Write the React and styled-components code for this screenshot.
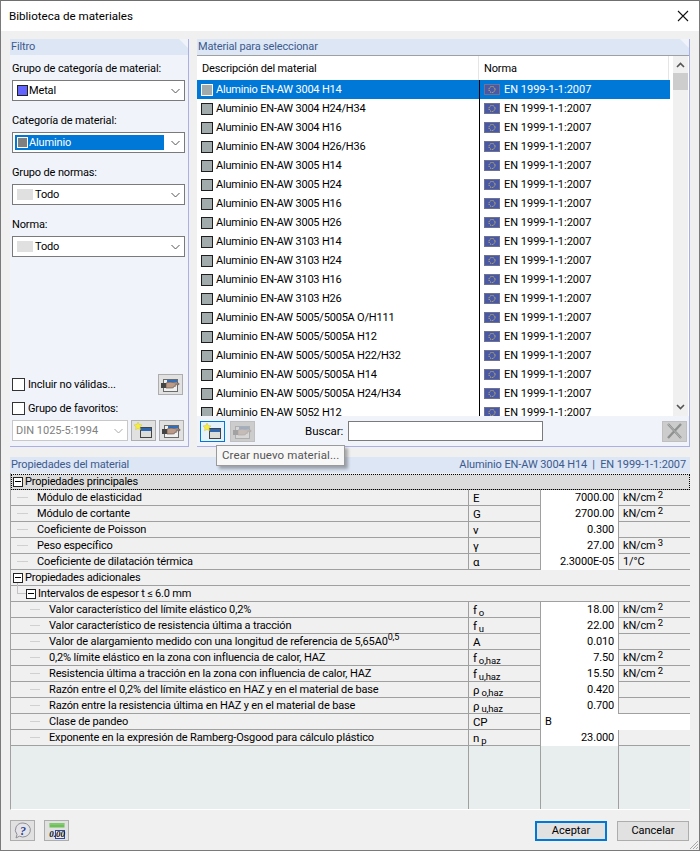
import React from 'react'
import styled, { createGlobalStyle } from 'styled-components'

const Global = createGlobalStyle`
  html, body { margin: 0; padding: 0; background: #f0f0f0; }
  * { box-sizing: border-box; }
`

const Dialog = styled.div`
  width: 700px;
  height: 851px;
  display: flex;
  flex-direction: column;
  background: #f0f0f0;
  border: 1px solid #7a7a7a;
  border-top-color: #6f6f6f;
  font-family: Roboto, "Noto Sans", sans-serif;
  font-size: 11px;
  letter-spacing: -.15px;
  color: #000;
  overflow: hidden;
  position: relative;
`

const TitleBar = styled.div`
  height: 30px;
  flex: none;
  background: #fff;
  display: flex;
  align-items: center;
  justify-content: space-between;
  padding: 0 10px 0 8px;
  font-size: 11.6px;
  letter-spacing: 0;
`

const Body = styled.div`
  flex: 1;
  min-height: 0;
  display: flex;
  flex-direction: column;
  padding: 8px 9px 9px 9px;
`

const TopRow = styled.div`
  display: flex;
  gap: 8px;
  height: 408px;
  flex: none;
`

const Panel = styled.section`
  display: flex;
  flex-direction: column;
  width: ${({ $width }) => $width};
  background: #f0f4fa;
  border-right: 1px solid #aab0e6;
  border-bottom: 1px solid #aab0e6;
`

const PanelHead = styled.div`
  height: 16px;
  flex: none;
  padding: 0 2px 0 1px;
  display: flex;
  justify-content: space-between;
  align-items: center;
  background: #dce6f4;
  color: #3c5a8e;
  line-height: 16px;
  white-space: nowrap;
  clip-path: ${({ $cut }) => $cut ? 'polygon(0 0, calc(100% - 9px) 0, 100% 9px, 100% 100%, 0 100%)' : 'none'};
`

const FilterBody = styled.div`
  flex: 1;
  display: flex;
  flex-direction: column;
  padding: 5px 5px 5px 2px;
`

const FieldLabel = styled.label`
  height: 20px;
  line-height: 18px;
  display: block;
  white-space: nowrap;
`

const Select = styled.div`
  height: 21px;
  width: 173px;
  flex: none;
  margin-bottom: 11px;
  display: flex;
  align-items: center;
  padding: 0 4px 0 2px;
  background: #fff;
  border: 1px solid #7a7a7a;
`

const SelectValue = styled.div`
  flex: 1;
  height: 15px;
  margin-right: 7px;
  display: flex;
  align-items: center;
  gap: 1px;
  padding-left: 2px;
  background: ${({ $active }) => $active ? '#0078d7' : 'transparent'};
  color: ${({ $active }) => $active ? '#fff' : '#000'};
`

const Color = styled.span`
  width: ${({ $wide }) => $wide ? '16px' : '11px'};
  height: 11px;
  flex: none;
  margin-right: ${({ $wide }) => $wide ? '1px' : '0'};
  background: ${({ $color }) => $color};
  border: 1px solid ${({ $line }) => $line || '#222'};
`

const Chevron = ({ color = '#555' }) => (
  <svg width="9" height="6" viewBox="0 0 9 6" fill="none">
    <path d="M.5 1l4 4 4-4" stroke={color} strokeWidth="1" />
  </svg>
)

const CheckRow = styled.div`
  height: 21px;
  flex: none;
  display: flex;
  align-items: center;
  justify-content: space-between;
  margin-top: ${({ $top }) => $top || '0'};
`

const CheckLabel = styled.label`
  display: flex;
  align-items: center;
  gap: 3px;
  white-space: nowrap;
`

const Box = styled.span`
  width: 13px;
  height: 13px;
  background: #fff;
  border: 1px solid #333;
  display: block;
`

const FavRow = styled.div`
  display: flex;
  align-items: center;
  gap: 3px;
  margin-top: 1px;
`

const DisabledSelect = styled.div`
  width: 116px;
  height: 21px;
  flex: none;
  display: flex;
  align-items: center;
  justify-content: space-between;
  padding: 0 4px 0 3px;
  background: #fff;
  border: 1px solid #c8c8c8;
  color: #808080;
  letter-spacing: 0;
  white-space: nowrap;
`

const ToolButton = styled.button`
  width: 25px;
  height: 21px;
  padding: 0;
  flex: none;
  display: flex;
  align-items: center;
  justify-content: center;
  background: #e1e1e1;
  border: 1px solid #adadad;
  ${({ $sel }) => $sel && 'border-color: #0078d7; background: #e5f1fb;'}
  ${({ $off }) => $off && 'background: #cccccc; border-color: #bfbfbf;'}
`

const Header = styled.div`
  height: 24px;
  flex: none;
  display: grid;
  grid-template-columns: 282px 190px 1fr;
  background: #fff;
  line-height: 25px;
  margin-right: -3px;
`

const HeadCell = styled.div`
  padding-left: 5px;
  border-right: 1px solid #e5e5e5;
`

const ListArea = styled.div`
  height: 361px;
  flex: none;
  display: grid;
  grid-template-columns: 476px 15px 1px;
  background: #fff;
  border-top: 1px solid #a0a0a0;
`

const Rows = styled.div`
  height: 336px;
  overflow: hidden;
`

const ListWrap = styled.div`
  display: flex;
  flex-direction: column;
  height: 360px;
  min-width: 0;
  padding-right: 3px;
`

const MatRow = styled.div`
  height: 19px;
  display: grid;
  grid-template-columns: 282px 1fr;
  background: ${({ $sel }) => $sel ? '#0078d7' : '#fff'};
  color: ${({ $sel }) => $sel ? '#fff' : '#000'};
  line-height: 19px;
`

const MatName = styled.div`
  display: flex;
  align-items: center;
  gap: 3px;
  padding-left: 4px;
  letter-spacing: -.2px;
  white-space: nowrap;
`

const Swatch = styled.span`
  width: 12px;
  height: 12px;
  flex: none;
  background: #a2abab;
  border: 1px solid ${({ $sel }) => $sel ? '#fff' : '#1e1e1e'};
`

const MatNorm = styled.div`
  display: flex;
  align-items: center;
  gap: 4px;
  padding-left: 4px;
  border-left: 1px solid #000;
  letter-spacing: 0;
  white-space: nowrap;
`

const Scroll = styled.div`
  display: flex;
  flex-direction: column;
  justify-content: space-between;
  align-items: center;
  background: #f0f0f0;
  padding: 6px 0;
  position: relative;
`

const Thumb = styled.div`
  position: absolute;
  top: 17px;
  left: 0;
  width: 15px;
  height: 17px;
  background: #cdcdcd;
`

const Toolbar = styled.div`
  flex: 1;
  display: flex;
  align-items: center;
  padding: 0 2px 0 3px;
  gap: 5px;
`

const SearchLabel = styled.span`
  width: 38px;
  margin-left: 45px;
  font-size: 11.5px;
  letter-spacing: 0;
`

const Search = styled.div`
  width: 195px;
  height: 20px;
  background: #fff;
  border: 1px solid #7a7a7a;
`

const Spacer = styled.div`
  flex: 1;
`

const Tooltip = styled.div`
  position: absolute;
  left: 215px;
  top: 444px;
  width: 129px;
  height: 21px;
  padding-left: 5px;
  line-height: 19px;
  background: #f7f7f7;
  border: 1px solid #9a9a9a;
  color: #555;
  font-size: 11.5px;
  letter-spacing: .1px;
  white-space: nowrap;
  box-shadow: 3px 3px 3px rgba(0, 0, 0, .3);
  z-index: 2;
`

const Props = styled.section`
  margin-top: 10px;
  height: 353px;
  flex: none;
  display: flex;
  flex-direction: column;
`

const PropHeadRight = styled.span`
  margin-right: 2px;
  letter-spacing: -.1px;
`

const Table = styled.div`
  flex: 1;
  display: flex;
  flex-direction: column;
  padding-top: 1px;
  border-left: 1px solid #a0a0a0;
  border-bottom: 1px solid #fff;
`

const SectionRow = styled.div`
  height: 16px;
  flex: none;
  position: relative;
  display: flex;
  align-items: center;
  gap: 2px;
  padding-left: ${({ $indent }) => $indent || '2px'};
  border-bottom: 1px solid #a0a0a0;
  background: ${({ $focus }) => $focus ? '#dcdcdc' : '#f0f0f0'};
  ${({ $focus }) => $focus && 'outline: 1px dotted #000; outline-offset: -1px;'}
  letter-spacing: -.2px;
  line-height: 14px;
  ${({ $branch }) => $branch && `
    &::before {
      content: '';
      position: absolute;
      left: 6px;
      top: -3px;
      width: 9px;
      height: 10px;
      border-left: 1px solid #c4c4c4;
      border-bottom: 1px solid #c4c4c4;
    }
  `}
`

const Toggle = styled.span`
  width: 10px;
  height: 10px;
  flex: none;
  position: relative;
  background: #fff;
  border: 1px solid #222;
  &::after {
    content: '';
    position: absolute;
    left: 1px;
    right: 1px;
    top: 3.5px;
    height: 1px;
    background: #000;
  }
`

const GridRow = styled.div`
  height: 16px;
  flex: none;
  display: grid;
  grid-template-columns: 457px 72px 78px 1fr;
  border-bottom: 1px solid #a0a0a0;
  background: #f0f0f0;
`

const NameCell = styled.div`
  position: relative;
  padding-left: ${({ $deep }) => $deep ? '38px' : '26px'};
  line-height: 16px;
  white-space: nowrap;
  &::before {
    content: '';
    position: absolute;
    left: ${({ $deep }) => $deep ? '19px' : '6px'};
    width: ${({ $deep }) => $deep ? '10px' : '11px'};
    top: 7px;
    border-top: 1px solid #d0d0d0;
  }
`

const SymbolCell = styled.div`
  padding-left: 4px;
  line-height: 16px;
  border-left: 1px solid #a0a0a0;
  font-size: 11.5px;
  sub { font-size: 9.5px; vertical-align: -2px; line-height: 0; margin-left: 2px; }
`

const ValueCell = styled.div`
  padding-right: 4px;
  text-align: right;
  line-height: 16px;
  background: #fff;
  border-left: 1px solid #a0a0a0;
`

const WideValue = styled.div`
  grid-column: 3 / 5;
  padding-left: 4px;
  line-height: 16px;
  background: #fff;
  border-left: 1px solid #a0a0a0;
`

const UnitCell = styled.div`
  padding-left: 4px;
  line-height: 15px;
  border-left: 1px solid #a0a0a0;
  sup { font-size: 9.5px; vertical-align: 3px; line-height: 0; margin-left: 2px; }
`

const Filler = styled.div`
  flex: 1;
  display: grid;
  grid-template-columns: 457px 72px 78px 1fr;
  background: #e8eeee;
`

const FillCell = styled.div`
  border-left: ${({ $first }) => $first ? '0' : '1px solid #a0a0a0'};
`

const Footer = styled.div`
  flex: 1;
  display: flex;
  align-items: flex-end;
  gap: 9px;
`

const DialogButton = styled.button`
  width: 72px;
  height: 20px;
  padding: 0;
  font-family: inherit;
  font-size: 11px;
  line-height: 16px;
  color: #000;
  background: #e1e1e1;
  border: ${({ $main }) => $main ? '2px solid #0078d7' : '1px solid #adadad'};
  margin-left: ${({ $main }) => $main ? 'auto' : '1px'};
  margin-right: ${({ $main }) => $main ? '0' : '1px'};
`

const Grip = styled.svg`
  position: absolute;
  right: 0;
  bottom: 0;
`

const CloseIcon = () => (
  <svg width="12" height="12" viewBox="0 0 12 12" fill="none">
    <path d="M1 1l10 10M11 1L1 11" stroke="#111" strokeWidth="1.1" />
  </svg>
)

const Flag = () => (
  <svg width="16" height="11" viewBox="0 0 16 11" style={{ flex: 'none' }}>
    <rect width="16" height="11" fill="#4a58a8" />
    <rect x=".5" y=".5" width="15" height="10" fill="none" stroke="#6f7390" />
    <circle cx="8" cy="5.5" r="3" fill="none" stroke="#e5d24a" strokeWidth="1" strokeDasharray="1 .9" />
  </svg>
)

const NewIcon = () => (
  <svg width="23" height="19" viewBox="0 0 23 19">
    <rect x="8.5" y="6.5" width="11" height="10" fill="#dcdcd8" stroke="#444" />
    <rect x="9" y="7" width="10" height="3" fill="#2f66b0" />
    <path d="M6 1l1.2 2.6 2.8.3-2 2 .5 2.8L6 7.4 3.5 8.7 4 5.9l-2-2 2.8-.3z" fill="#f6ee3c" stroke="#cfc24a" strokeWidth=".5" />
  </svg>
)

const HandIcon = ({ off }) => (
  <svg width="23" height="19" viewBox="0 0 23 19" opacity={off ? 0.3 : 1}>
    <rect x="4.5" y="4.5" width="14" height="12" fill="#f0f0f0" stroke="#6a6a6a" />
    <rect x="8" y="5" width="10" height="2.5" fill="#2f6fc0" />
    <path d="M2 8h5V13H2z" fill="#444" />
    <path d="M7 8l4-1 3 .5 6 .8v1.3l-4 .3.5 1.4-2 .3-.2 1.2-2.3.2L7 13z" fill="#bb9a88" stroke="#5a4a42" strokeWidth=".6" />
  </svg>
)

const XIcon = () => (
  <svg width="19" height="18" viewBox="0 0 19 18" fill="none">
    <path d="M3 2l13 14M16 2L3 16" stroke="#8f9090" strokeWidth="2.4" />
    <path d="M3 2l13 14" stroke="#b4b6b6" strokeWidth="1" />
  </svg>
)

const HelpIcon = () => (
  <svg width="19" height="17" viewBox="0 0 19 17">
    <path d="M10 1a7.5 7 0 1 1-3.6 13.2L3 16l1-3.6A7.5 7 0 0 1 10 1z" fill="#e4e4e8" stroke="#8f8f96" />
    <text x="10" y="12.5" textAnchor="middle" fontSize="12" fontWeight="700" fontStyle="italic" fontFamily="Liberation Serif, serif" fill="#2b3f90">?</text>
  </svg>
)

const ZeroIcon = () => (
  <svg width="18" height="18" viewBox="0 0 18 18">
    <rect x="1.5" y="1" width="15" height="4.5" fill="#6fbf5a" />
    <path d="M3 1v2M5 1v2M7 1v2M9 1v2M11 1v2M13 1v2M15 1v2" stroke="#a8e09a" strokeWidth=".6" />
    <rect x="7.5" y="8.5" width="9" height="8" fill="#e8ecf6" stroke="#2e4a9a" />
    <text x="9" y="15" textAnchor="middle" fontSize="9" fontWeight="700" fontStyle="italic" fontFamily="Liberation Serif, serif" fill="#111">0.00</text>
  </svg>
)

const materials = [
  '3004 H14', '3004 H24/H34', '3004 H16', '3004 H26/H36',
  '3005 H14', '3005 H24', '3005 H16', '3005 H26',
  '3103 H14', '3103 H24', '3103 H16', '3103 H26',
  '5005/5005A O/H111', '5005/5005A H12', '5005/5005A H22/H32',
  '5005/5005A H14', '5005/5005A H24/H34', '5052 H12'
]

const Sym = ({ base, sub }) => <>{base}{sub && <sub>{sub}</sub>}</>

const Unit = ({ power }) => power ? <>kN/cm<sup>{power}</sup></> : null

const mainProps = [
  { name: 'Módulo de elasticidad', base: 'E', value: '7000.00', power: 2 },
  { name: 'Módulo de cortante', base: 'G', value: '2700.00', power: 2 },
  { name: 'Coeficiente de Poisson', base: 'ν', value: '0.300' },
  { name: 'Peso específico', base: 'γ', value: '27.00', power: 3 },
  { name: 'Coeficiente de dilatación térmica', base: 'α', value: '2.3000E-05', unit: '1/°C' }
]

const extraProps = [
  { name: 'Valor característico del límite elástico 0,2%', base: 'f', sub: 'o', value: '18.00', power: 2 },
  { name: 'Valor característico de resistencia última a tracción', base: 'f', sub: 'u', value: '22.00', power: 2 },
  { name: <>Valor de alargamiento medido con una longitud de referencia de 5,65A0<sup style={{ fontSize: 9, lineHeight: 0 }}>0,5</sup></>, base: 'A', value: '0.010' },
  { name: '0,2% límite elástico en la zona con influencia de calor, HAZ', base: 'f', sub: 'o,haz', value: '7.50', power: 2 },
  { name: 'Resistencia última a tracción en la zona con influencia de calor, HAZ', base: 'f', sub: 'u,haz', value: '15.50', power: 2 },
  { name: 'Razón entre el 0,2% del límite elástico en HAZ y en el material de base', base: 'ρ', sub: 'o,haz', value: '0.420' },
  { name: 'Razón entre la resistencia última en HAZ y en el material de base', base: 'ρ', sub: 'u,haz', value: '0.700' },
  { name: 'Clase de pandeo', base: 'CP', text: 'B' },
  { name: 'Exponente en la expresión de Ramberg-Osgood para cálculo plástico', base: 'n', sub: 'p', value: '23.000' }
]

const PropRow = ({ row, deep }) => (
  <GridRow>
    <NameCell $deep={deep}>{row.name}</NameCell>
    <SymbolCell><Sym base={row.base} sub={row.sub} /></SymbolCell>
    {row.text
      ? <WideValue>{row.text}</WideValue>
      : <>
          <ValueCell>{row.value}</ValueCell>
          <UnitCell>{row.unit || <Unit power={row.power} />}</UnitCell>
        </>}
  </GridRow>
)

const Field = ({ label, children }) => (
  <>
    <FieldLabel>{label}</FieldLabel>
    <Select>
      {children}
      <Chevron />
    </Select>
  </>
)

export default function App() {
  return (
    <Dialog>
      <Global />
      <TitleBar>
        <span>Biblioteca de materiales</span>
        <CloseIcon />
      </TitleBar>
      <Body>
        <TopRow>
          <Panel $width="179px">
            <PanelHead $cut>Filtro</PanelHead>
            <FilterBody>
              <Field label="Grupo de categoría de material:">
                <SelectValue><Color $color="#6464ff" />Metal</SelectValue>
              </Field>
              <Field label="Categoría de material:">
                <SelectValue $active><Color $color="#808080" $line="#fff" />Aluminio</SelectValue>
              </Field>
              <Field label="Grupo de normas:">
                <SelectValue><Color $wide $color="#e0e0e0" $line="#e0e0e0" />Todo</SelectValue>
              </Field>
              <Field label="Norma:">
                <SelectValue><Color $wide $color="#e0e0e0" $line="#e0e0e0" />Todo</SelectValue>
              </Field>
              <CheckRow $top="auto">
                <CheckLabel><Box />Incluir no válidas...</CheckLabel>
                <ToolButton><HandIcon /></ToolButton>
              </CheckRow>
              <CheckRow $top="3px">
                <CheckLabel><Box />Grupo de favoritos:</CheckLabel>
              </CheckRow>
              <FavRow>
                <DisabledSelect>DIN 1025-5:1994<Chevron color="#aaa" /></DisabledSelect>
                <ToolButton><NewIcon /></ToolButton>
                <ToolButton><HandIcon /></ToolButton>
              </FavRow>
            </FilterBody>
          </Panel>
          <Panel $width="493px">
            <PanelHead $cut>Material para seleccionar</PanelHead>
            <ListArea>
              <ListWrap>
                <Header>
                  <HeadCell>Descripción del material</HeadCell>
                  <HeadCell>Norma</HeadCell>
                </Header>
                <Rows>
                  {materials.map((m, i) => (
                    <MatRow key={m} $sel={i === 0}>
                      <MatName><Swatch $sel={i === 0} />Aluminio EN-AW {m}</MatName>
                      <MatNorm><Flag />EN 1999-1-1:2007</MatNorm>
                    </MatRow>
                  ))}
                </Rows>
              </ListWrap>
              <Scroll>
                <Thumb />
                <svg width="9" height="6" viewBox="0 0 9 6" fill="none"><path d="M1 5l3.5-3.5L8 5" stroke="#555" strokeWidth="1.6" /></svg>
                <svg width="9" height="6" viewBox="0 0 9 6" fill="none"><path d="M1 1l3.5 3.5L8 1" stroke="#555" strokeWidth="1.6" /></svg>
              </Scroll>
            </ListArea>
            <Toolbar>
              <ToolButton $sel><NewIcon /></ToolButton>
              <ToolButton $off><HandIcon off /></ToolButton>
              <SearchLabel>Buscar:</SearchLabel>
              <Search />
              <Spacer />
              <ToolButton $off><XIcon /></ToolButton>
            </Toolbar>
          </Panel>
        </TopRow>
        <Tooltip>Crear nuevo material...</Tooltip>
        <Props>
          <PanelHead>
            <span>Propiedades del material</span>
            <PropHeadRight>Aluminio EN-AW 3004 H14&nbsp; | &nbsp;EN 1999-1-1:2007</PropHeadRight>
          </PanelHead>
          <Table>
            <SectionRow $focus><Toggle />Propiedades principales</SectionRow>
            {mainProps.map((row, i) => <PropRow key={i} row={row} />)}
            <SectionRow><Toggle />Propiedades adicionales</SectionRow>
            <SectionRow $indent="15px" $branch><Toggle />Intervalos de espesor t ≤ 6.0 mm</SectionRow>
            {extraProps.map((row, i) => <PropRow key={i} row={row} deep />)}
            <Filler>
              <FillCell $first /><FillCell /><FillCell /><FillCell />
            </Filler>
          </Table>
        </Props>
        <Footer>
          <ToolButton><HelpIcon /></ToolButton>
          <ToolButton><ZeroIcon /></ToolButton>
          <DialogButton $main>Aceptar</DialogButton>
          <DialogButton>Cancelar</DialogButton>
        </Footer>
      </Body>
      <Grip width="11" height="11" viewBox="0 0 11 11" fill="none">
        <path d="M10 2L2 10M10 5l-5 5M10 8l-2 2" stroke="#a8a8a8" />
      </Grip>
    </Dialog>
  )
}
